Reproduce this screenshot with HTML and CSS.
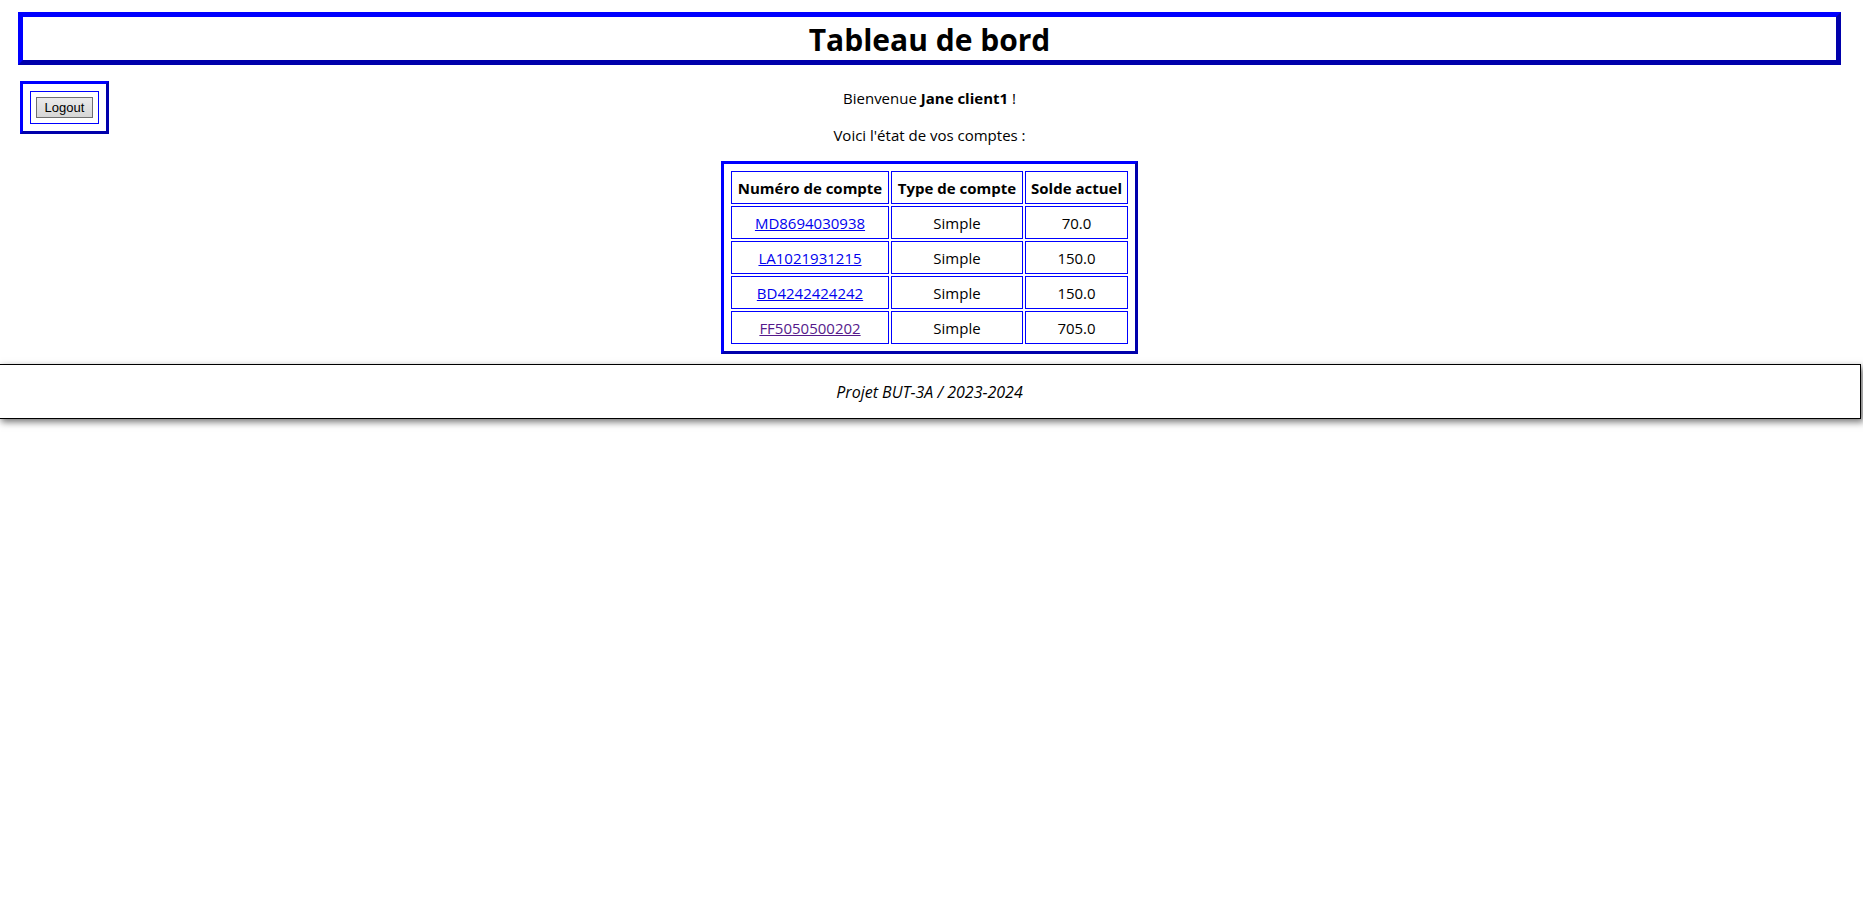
FILE: index.html
```html
<!DOCTYPE html>
<html lang="fr">
<head>
<meta charset="utf-8">
<title>Tableau de bord</title>
<link rel="stylesheet" href="styles.css">
</head>
<body>
<header class="banner"><h1 class="title">Tableau de bord</h1></header>
<div class="content">
  <form class="frame logout" onsubmit="return false">
    <div class="logout-cell"><button class="logout-button" type="submit">Logout</button></div>
  </form>
  <main class="dashboard">
    <p class="message">Bienvenue <b>Jane client1</b> !</p>
    <p class="message">Voici l'état de vos comptes :</p>
    <table class="frame accounts">
      <thead>
        <tr><th class="col-number">Numéro de compte</th><th class="col-type">Type de compte</th><th class="col-balance">Solde actuel</th></tr>
      </thead>
      <tbody>
        <tr><td><a href="#MD8694030938">MD8694030938</a></td><td>Simple</td><td>70.0</td></tr>
        <tr><td><a href="#LA1021931215">LA1021931215</a></td><td>Simple</td><td>150.0</td></tr>
        <tr><td><a href="#BD4242424242">BD4242424242</a></td><td>Simple</td><td>150.0</td></tr>
        <tr><td><a class="visited" href="#FF5050500202">FF5050500202</a></td><td>Simple</td><td>705.0</td></tr>
      </tbody>
    </table>
  </main>
</div>
<footer class="footer">Projet BUT-3A / 2023-2024</footer>
</body>
</html>
```
FILE: styles.css
```css
* { box-sizing: border-box; }
body {
  margin: 0;
  padding: 12px 4px 12px 0;
  min-height: 100vh;
  background: #fff;
  color: #000;
  font-family: "Segoe UI", "Open Sans", "Noto Sans", sans-serif;
  font-size: 15px;
  line-height: 21px;
}
.banner {
  margin: 0 18px 16px;
  border: 5px outset #00f;
  text-align: center;
}
.title {
  margin: 0;
  padding-top: 2px;
  font-size: 30px;
  line-height: 41px;
  font-weight: 700;
}
.content {
  display: grid;
  grid-template-columns: 1fr auto 1fr;
  align-items: start;
  margin: 0 20px 10px;
}
.frame { border: 3px outset #00f; }
.logout {
  justify-self: start;
  padding: 7px;
}
.logout-cell {
  border: 1px solid #00f;
  padding: 5px;
}
.logout-button {
  display: block;
  min-width: 57px;
  height: 21px;
  padding: 0 7px;
  border: 1px solid #707070;
  border-radius: 0;
  background: linear-gradient(#ebebeb, #d6d6d6);
  color: #000;
  font: 13px/19px "Liberation Sans", Arial, sans-serif;
}
.dashboard {
  padding-top: 6px;
  text-align: center;
}
.message {
  margin: 0 0 15px;
  padding-top: 1px;
}
.accounts {
  padding: 5px;
  border-spacing: 2px;
}
.accounts th, .accounts td {
  padding: 6px 5px 4px;
  border: 1px solid #00f;
}
.col-number { width: 158px; }
.col-type { width: 132px; }
.col-balance { width: 103px; }
.accounts a { color: #0000ee; }
.accounts .visited { color: #551a8b; }
.footer {
  margin: 0 -2px;
  padding: 17px 0 15px;
  border: 1px solid #000;
  box-shadow: 3px 3px 7px rgba(0, 0, 0, 0.55);
  font-size: 16px;
  font-style: italic;
  text-align: center;
}
```
